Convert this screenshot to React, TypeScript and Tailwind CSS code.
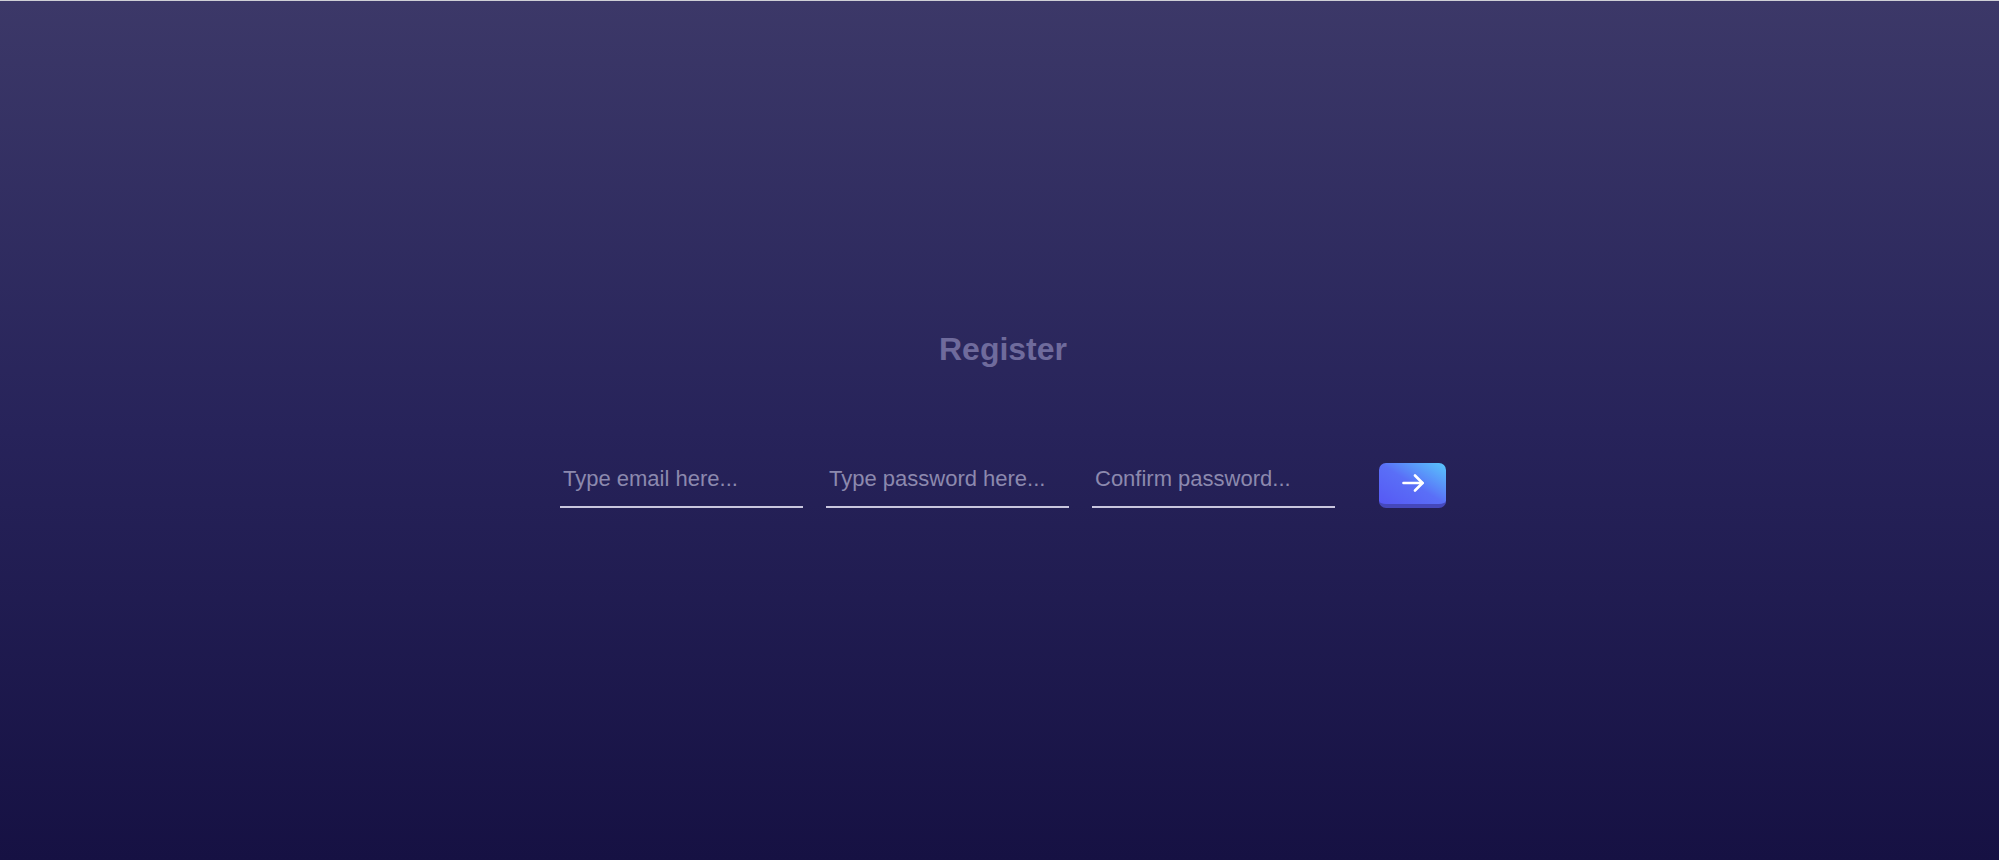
export default function App() {
  return (
    <div className="min-h-screen w-full border-t border-[#cfcfd6] bg-gradient-to-b from-[#3c3868] via-[#27235a] to-[#161143] flex flex-col items-center">
      <h1 className="mt-[326px] ml-[7px] text-[32px] leading-[44px] font-bold text-[#6f6b9c] font-['Liberation_Sans',Arial,sans-serif]">
        Register
      </h1>

      <form
        className="mt-[92px] ml-[7px] flex items-end"
        onSubmit={(e) => e.preventDefault()}
      >
        <input
          type="email"
          placeholder="Type email here..."
          className="w-[243px] bg-transparent border-b-2 border-[#c9c6de] px-[3px] pt-[2px] pb-[14px] text-[22px] leading-[27px] text-[#c9c6de] placeholder:text-[#8c89ae] outline-none font-['Liberation_Sans',Arial,sans-serif]"
        />
        <input
          type="password"
          placeholder="Type password here..."
          className="ml-[23px] w-[243px] bg-transparent border-b-2 border-[#c9c6de] px-[3px] pt-[2px] pb-[14px] text-[22px] leading-[27px] text-[#c9c6de] placeholder:text-[#8c89ae] outline-none font-['Liberation_Sans',Arial,sans-serif]"
        />
        <input
          type="password"
          placeholder="Confirm password..."
          className="ml-[23px] w-[243px] bg-transparent border-b-2 border-[#c9c6de] px-[3px] pt-[2px] pb-[14px] text-[22px] leading-[27px] text-[#c9c6de] placeholder:text-[#8c89ae] outline-none font-['Liberation_Sans',Arial,sans-serif]"
        />
        <button
          type="submit"
          className="ml-[44px] w-[67px] h-[45px] rounded-[7px] border-b-4 border-[#4548bb] bg-gradient-to-tr from-[#5658f4] via-[#5a6ff7] to-[#58c6fb] flex items-center justify-center text-white"
        >
          <svg
            width="22"
            height="18"
            viewBox="0 0 22 18"
            fill="none"
            stroke="currentColor"
            strokeWidth="2.6"
            strokeLinecap="round"
            strokeLinejoin="round"
            className="mb-[2px]"
          >
            <path d="M1.5 9H20.5" />
            <path d="M13 1.5L20.5 9L13 16.5" />
          </svg>
        </button>
      </form>
    </div>
  );
}
